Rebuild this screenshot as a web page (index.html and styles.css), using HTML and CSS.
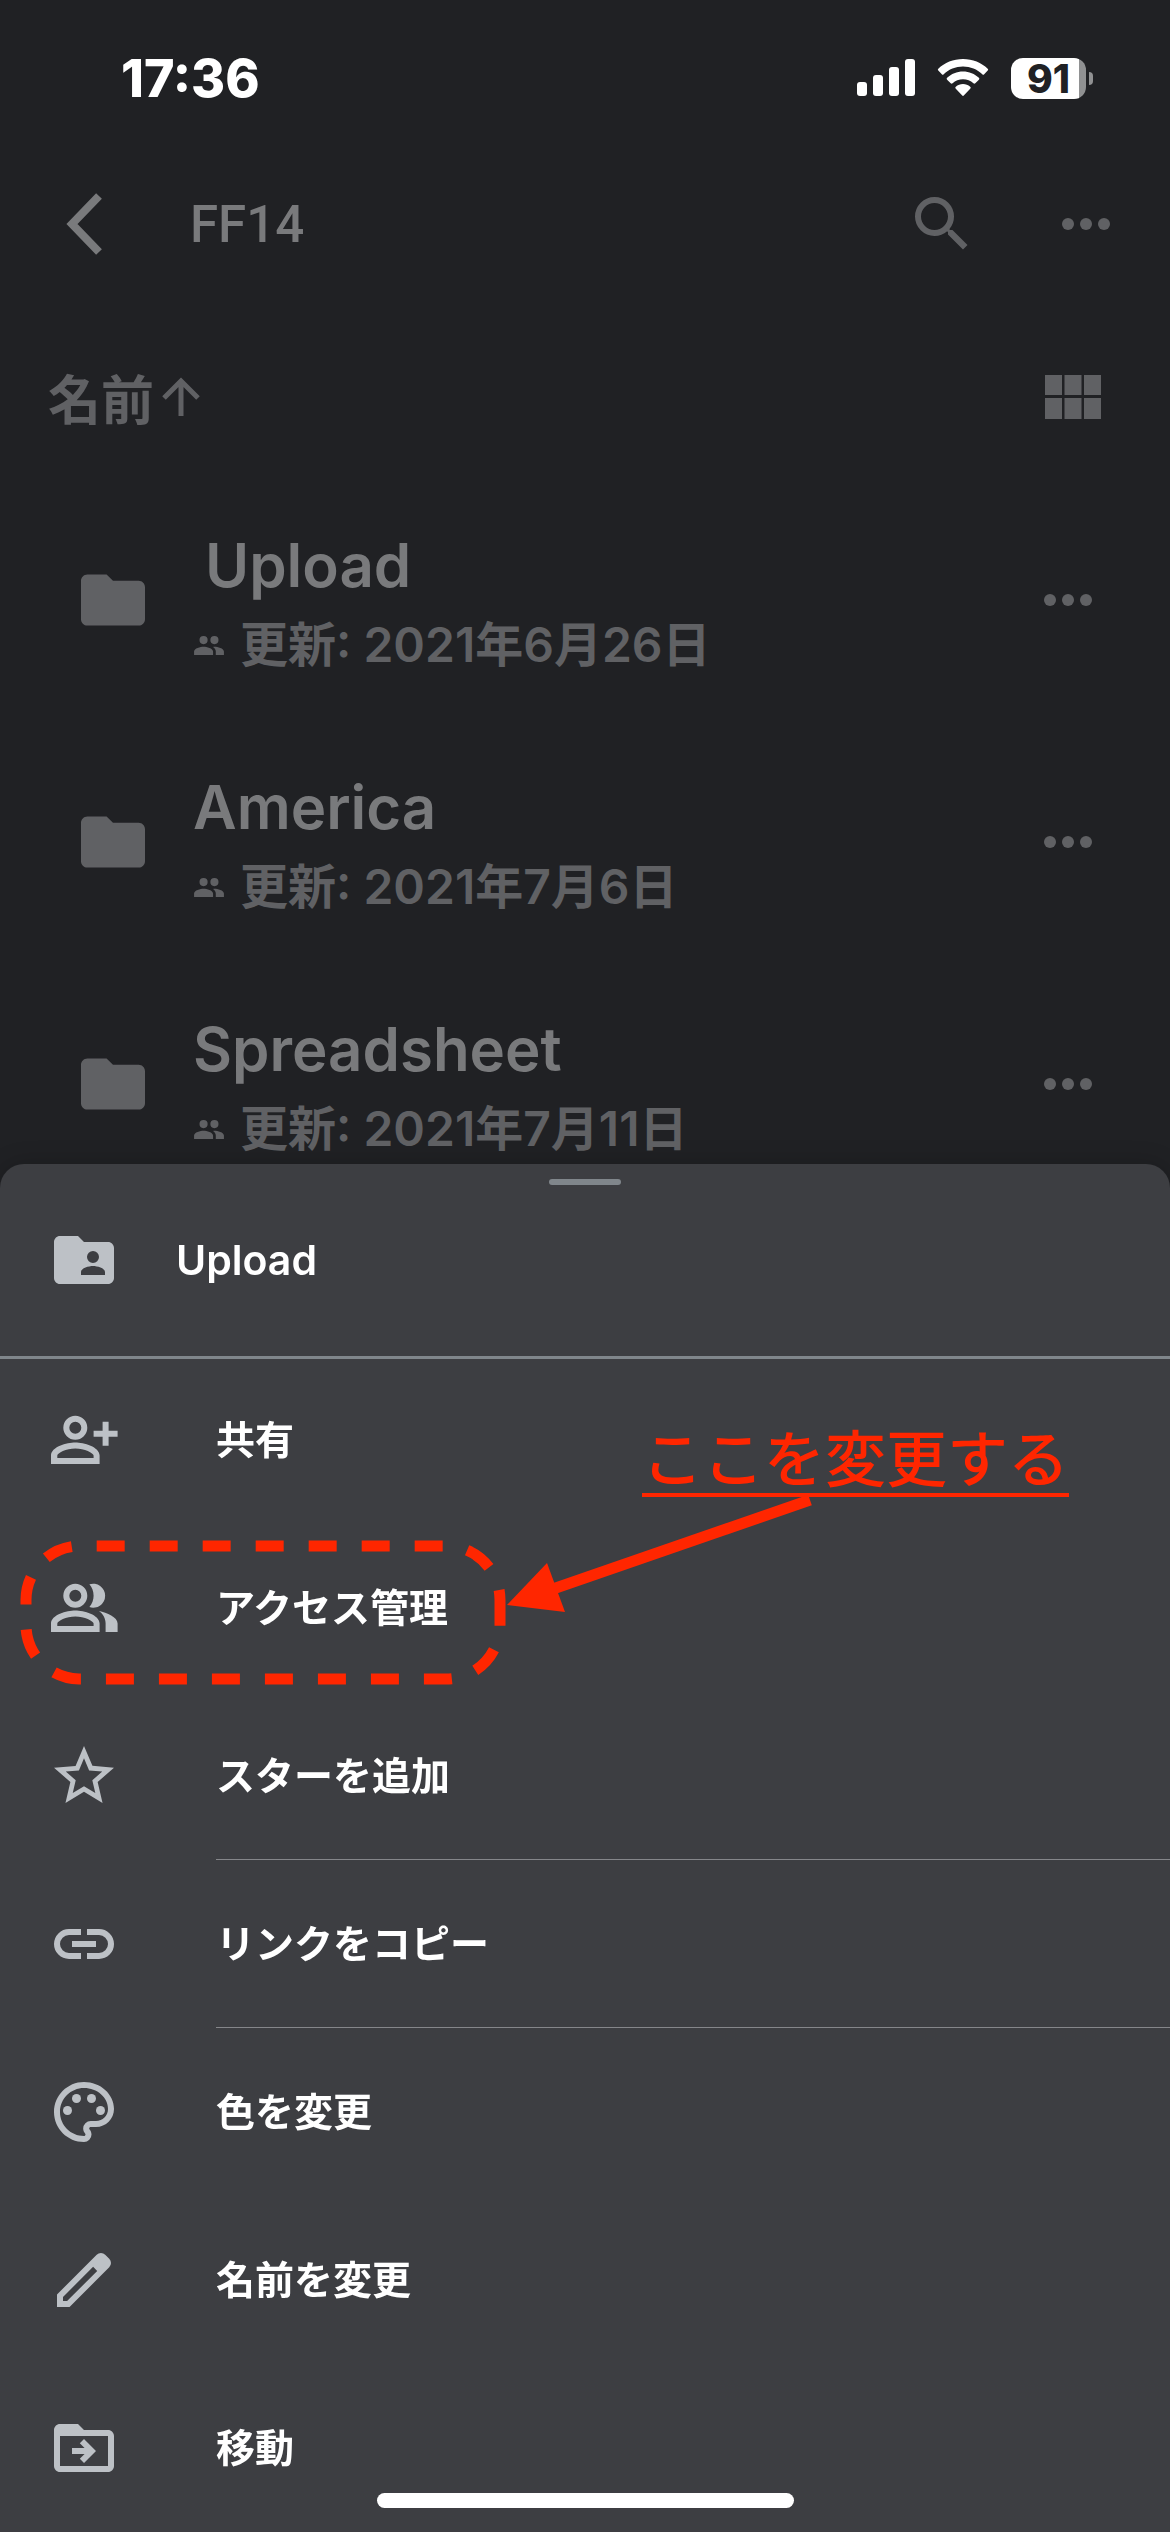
FILE: index.html
```html
<!DOCTYPE html>
<html lang="ja">
<head>
    <meta charset="UTF-8">
    <meta name="viewport" content="width=device-width, initial-scale=1.0">
    <title>FF14</title>
    <link rel="stylesheet" href="styles.css">
</head>
<body>
    <div class="status-bar">
        <span class="clock">17:36</span>
        <div class="status-icons">
            <svg class="signal" width="58" height="38" viewBox="0 0 58 38" fill="currentColor">
                <rect x="0" y="23" width="10" height="14" rx="3"/>
                <rect x="16" y="16" width="10" height="21" rx="3"/>
                <rect x="32" y="8" width="10" height="29" rx="3"/>
                <rect x="48" y="0" width="10" height="37" rx="3"/>
            </svg>
            <svg class="wifi" width="52" height="38" viewBox="0 0 52 38" fill="currentColor">
                <path d="M26 0C35.600 0 44.500 3.700 50.700 9.700a1.300 1.300 0 0 1 0 1.900l-3.500 3.600a1.300 1.300 0 0 1-1.900 0C40.200 10.300 33.400 7.500 26 7.500S11.800 10.300 6.700 15.200a1.300 1.300 0 0 1-1.900 0l-3.500-3.600a1.300 1.300 0 0 1 0-1.900C7.500 3.700 16.400 0 26 0z"/>
                <path d="M26 12.500c6.100 0 11.700 2.400 15.900 6.300a1.300 1.300 0 0 1 0 1.900l-3.600 3.600a1.400 1.400 0 0 1-1.900 0C33.700 21.700 30 20.200 26 20.200s-7.700 1.500-10.400 4.100a1.400 1.400 0 0 1-1.900 0l-3.600-3.600a1.300 1.300 0 0 1 0-1.900c4.200-3.900 9.800-6.300 15.900-6.300z"/>
                <path d="M26 25c2.700 0 5.200 1 7.200 2.700a1.300 1.300 0 0 1 0 2l-6.200 6.600a1.300 1.300 0 0 1-2 0l-6.200-6.600a1.300 1.300 0 0 1 0-2C20.800 26 23.300 25 26 25z"/>
            </svg>
            <div class="battery"><span class="battery-level">91</span></div>
        </div>
    </div>

    <header class="toolbar">
        <button class="icon-button" type="button" aria-label="戻る">
            <svg width="72" height="72" viewBox="0 0 72 72" fill="none" stroke="currentColor" stroke-width="8">
                <path d="M51 8L24 36l27 28"/>
            </svg>
        </button>
        <h1 class="folder-title">FF14</h1>
        <button class="icon-button" type="button" aria-label="検索">
            <svg width="72" height="72" viewBox="0 0 24 24" fill="currentColor">
                <path d="M15.500 14h-.79l-.28-.27A6.471 6.471 0 0 0 16 9.500 6.500 6.500 0 1 0 9.500 16c1.610 0 3.090-.59 4.230-1.570l.27.28v.79l5 4.990L20.490 19l-4.990-5zm-6 0C7.010 14 5 11.990 5 9.500S7.010 5 9.500 5 14 7.010 14 9.500 11.990 14 9.500 14z"/>
            </svg>
        </button>
        <button class="icon-button" type="button" aria-label="その他">
            <svg width="72" height="72" viewBox="0 0 24 24" fill="currentColor">
                <circle cx="6" cy="12" r="2"/><circle cx="12" cy="12" r="2"/><circle cx="18" cy="12" r="2"/>
            </svg>
        </button>
    </header>

    <div class="sort-row">
        <button class="sort-button" type="button">名前
            <svg width="38" height="40" viewBox="0 0 38 40" fill="none" stroke="currentColor" stroke-width="5">
                <path d="M19 39V4M2 21L19 4l17 17"/>
            </svg>
        </button>
        <button class="icon-button" type="button" aria-label="グリッド表示">
            <svg width="56" height="44" viewBox="0 0 56 44" fill="currentColor">
                <path d="M0 0h17v20H0zM19.500 0h17v20h-17zM39 0h17v20H39zM0 23h17v21H0zM19.500 23h17v21h-17zM39 23h17v21H39z"/>
            </svg>
        </button>
    </div>

    <ul class="file-list">
        <li class="file">
            <svg class="file-icon" viewBox="2 4 20 16"><path d="M10 4H4c-1.100 0-2 .9-2 2v12c0 1.100.9 2 2 2h16c1.100 0 2-.9 2-2V8c0-1.100-.9-2-2-2h-8z"/></svg>
            <div class="file-info">
                <h2 class="file-name indented">Upload</h2>
                <p class="file-date">
                    <svg class="shared-icon" viewBox="1 5 22 14"><path d="M16 11a3 3 0 1 0 0-6 3 3 0 0 0 0 6zM8 11a3 3 0 1 0 0-6 3 3 0 0 0 0 6zM8 13c-2.330 0-7 1.170-7 3.500V19h14v-2.500C15 14.170 10.330 13 8 13zM16 13c-.29 0-.62.020-.97.050C16.190 13.890 17 15.020 17 16.500V19h6v-2.500c0-2.330-4.670-3.500-7-3.500z"/></svg>
                    更新: 2021年6月26日
                </p>
            </div>
            <button class="icon-button" type="button" aria-label="Upload のメニュー">
                <svg width="72" height="72" viewBox="0 0 24 24" fill="currentColor">
                    <circle cx="6" cy="12" r="2"/><circle cx="12" cy="12" r="2"/><circle cx="18" cy="12" r="2"/>
                </svg>
            </button>
        </li>
        <li class="file">
            <svg class="file-icon" viewBox="2 4 20 16"><path d="M10 4H4c-1.100 0-2 .9-2 2v12c0 1.100.9 2 2 2h16c1.100 0 2-.9 2-2V8c0-1.100-.9-2-2-2h-8z"/></svg>
            <div class="file-info">
                <h2 class="file-name">America</h2>
                <p class="file-date">
                    <svg class="shared-icon" viewBox="1 5 22 14"><path d="M16 11a3 3 0 1 0 0-6 3 3 0 0 0 0 6zM8 11a3 3 0 1 0 0-6 3 3 0 0 0 0 6zM8 13c-2.330 0-7 1.170-7 3.500V19h14v-2.500C15 14.170 10.330 13 8 13zM16 13c-.29 0-.62.020-.97.050C16.190 13.890 17 15.020 17 16.500V19h6v-2.500c0-2.330-4.670-3.500-7-3.500z"/></svg>
                    更新: 2021年7月6日
                </p>
            </div>
            <button class="icon-button" type="button" aria-label="America のメニュー">
                <svg width="72" height="72" viewBox="0 0 24 24" fill="currentColor">
                    <circle cx="6" cy="12" r="2"/><circle cx="12" cy="12" r="2"/><circle cx="18" cy="12" r="2"/>
                </svg>
            </button>
        </li>
        <li class="file">
            <svg class="file-icon" viewBox="2 4 20 16"><path d="M10 4H4c-1.100 0-2 .9-2 2v12c0 1.100.9 2 2 2h16c1.100 0 2-.9 2-2V8c0-1.100-.9-2-2-2h-8z"/></svg>
            <div class="file-info">
                <h2 class="file-name">Spreadsheet</h2>
                <p class="file-date">
                    <svg class="shared-icon" viewBox="1 5 22 14"><path d="M16 11a3 3 0 1 0 0-6 3 3 0 0 0 0 6zM8 11a3 3 0 1 0 0-6 3 3 0 0 0 0 6zM8 13c-2.330 0-7 1.170-7 3.500V19h14v-2.500C15 14.170 10.330 13 8 13zM16 13c-.29 0-.62.020-.97.050C16.190 13.890 17 15.020 17 16.500V19h6v-2.500c0-2.330-4.670-3.500-7-3.500z"/></svg>
                    更新: 2021年7月11日
                </p>
            </div>
            <button class="icon-button" type="button" aria-label="Spreadsheet のメニュー">
                <svg width="72" height="72" viewBox="0 0 24 24" fill="currentColor">
                    <circle cx="6" cy="12" r="2"/><circle cx="12" cy="12" r="2"/><circle cx="18" cy="12" r="2"/>
                </svg>
            </button>
        </li>
    </ul>

    <!-- メニューシート -->
    <section class="sheet">
        <div class="handle"></div>
        <div class="sheet-header">
            <svg class="menu-icon" viewBox="0 0 24 24"><path fill-rule="evenodd" d="M10 4H4c-1.100 0-2 .9-2 2v12c0 1.100.9 2 2 2h16c1.100 0 2-.9 2-2V8c0-1.100-.9-2-2-2h-8zM15 9a2 2 0 1 1 0 4 2 2 0 0 1 0-4zM11 17v-1c0-1.330 2.670-2 4-2s4 .67 4 2v1z"/></svg>
            <h2 class="sheet-title">Upload</h2>
        </div>
        <nav class="menu">
            <button class="menu-item" type="button">
                <svg class="menu-icon" viewBox="0 0 24 24"><path fill-rule="evenodd" d="M9.100 3.900a4 4 0 1 1 0 8 4 4 0 0 1 0-8zm0 2a2 2 0 1 0 0 4 2 2 0 0 0 0-4zM1 20v-2.800c0-3 5.300-4.400 8.100-4.400s8.100 1.400 8.100 4.400V20zM3.100 18h12.100v-.8c0-.9-3.100-2.400-6.100-2.400s-6 1.500-6 2.400zM18.200 5.900h2v3h3v2h-3v3h-2v-3h-3v-2h3z"/></svg>
                <span class="menu-label">共有</span>
            </button>
            <button class="menu-item" type="button">
                <svg class="menu-icon" viewBox="0 0 24 24"><path fill-rule="evenodd" d="M9.100 3.900a4 4 0 1 1 0 8 4 4 0 0 1 0-8zm0 2a2 2 0 1 0 0 4 2 2 0 0 0 0-4zM1 20v-2.800c0-3 5.300-4.400 8.100-4.400s8.100 1.400 8.100 4.400V20zM3.100 18h12.100v-.8c0-.9-3.100-2.400-6.100-2.400s-6 1.500-6 2.400zM13.800 4.100a4 4 0 1 1 0 7.600c.9-1.100 1.400-2.400 1.400-3.800s-.5-2.700-1.400-3.800zM17 13c2.600.6 6.200 2 6.200 4.200V20h-4v-2.800c0-1.700-.8-3.200-2.200-4.200z"/></svg>
                <span class="menu-label">アクセス管理</span>
            </button>
            <button class="menu-item" type="button">
                <svg class="menu-icon" viewBox="0 0 24 24"><path d="M22 9.240l-7.190-.62L12 2 9.190 8.630 2 9.240l5.460 4.730L5.820 21 12 17.270 18.180 21l-1.630-7.030L22 9.240zM12 15.400l-3.760 2.270 1-4.280-3.320-2.880 4.380-.38L12 6.100l1.710 4.040 4.380.38-3.320 2.880 1 4.280L12 15.400z"/></svg>
                <span class="menu-label divided">スターを追加</span>
            </button>
            <button class="menu-item" type="button">
                <svg class="menu-icon" viewBox="0 0 24 24"><path d="M11 9V7H7a5 5 0 0 0 0 10h4v-2H7a3 3 0 0 1 0-6zM13 9V7h4a5 5 0 0 1 0 10h-4v-2h4a3 3 0 0 0 0-6zM8 11h8v2H8z"/></svg>
                <span class="menu-label divided">リンクをコピー</span>
            </button>
            <button class="menu-item" type="button">
                <svg class="menu-icon" viewBox="0 0 24 24">
                    <path d="M12 22C6.490 22 2 17.510 2 12S6.490 2 12 2s10 4.040 10 9c0 3.310-2.690 6-6 6h-1.770c-.28 0-.5.22-.5.5 0 .12.050.23.130.33.410.47.640 1.060.640 1.670A2.500 2.500 0 0 1 12 22zm0-18c-4.410 0-8 3.590-8 8s3.590 8 8 8c.28 0 .5-.22.5-.5a.54.54 0 0 0-.14-.35c-.41-.46-.63-1.050-.63-1.650a2.500 2.500 0 0 1 2.500-2.500H16c2.210 0 4-1.790 4-4 0-3.860-3.590-7-8-7z"/>
                    <circle cx="6.500" cy="11.500" r="1.500"/><circle cx="9.500" cy="7.500" r="1.500"/><circle cx="14.500" cy="7.500" r="1.500"/><circle cx="17.500" cy="11.500" r="1.500"/>
                </svg>
                <span class="menu-label">色を変更</span>
            </button>
            <button class="menu-item" type="button">
                <svg class="menu-icon" viewBox="0 0 24 24"><path fill-rule="evenodd" d="M20.410 4.940l-1.350-1.350a2 2 0 0 0-2.830 0L3 16.820V21h4.180L20.410 7.770a2 2 0 0 0 0-2.830zM5 19v-1.360L15.040 7.600l1.360 1.360L6.360 19z"/></svg>
                <span class="menu-label">名前を変更</span>
            </button>
            <button class="menu-item" type="button">
                <svg class="menu-icon" viewBox="0 0 24 24"><path fill-rule="evenodd" d="M20 6h-8l-2-2H4c-1.100 0-2 .9-2 2v12c0 1.100.9 2 2 2h16c1.100 0 2-.9 2-2V8c0-1.100-.9-2-2-2zm0 12H4V8h16zM12 9l4 4-4 4-1.400-1.400 1.600-1.600H8v-2h4.200l-1.600-1.600z"/></svg>
                <span class="menu-label">移動</span>
            </button>
        </nav>

        <!-- 注釈 -->
        <svg class="marks" width="840" height="200" viewBox="0 1490 840 200">
            <path d="M500 1618V1600A54 54 0 0 0 446 1546H79A54 54 0 0 0 26 1600V1625A54 54 0 0 0 79 1679H446A54 54 0 0 0 500 1625Z" fill="none" stroke="#ff2600" stroke-width="11" stroke-dasharray="28 25"/>
            <path d="M810 1500L550 1590" stroke="#ff2600" stroke-width="11"/>
            <path d="M507 1605L547 1563L565 1612Z" fill="#ff2600"/>
        </svg>
        <p class="note">ここを変更する</p>
        <div class="home-indicator"></div>
    </section>
</body>
</html>
```

FILE: styles.css
```css
* {
    box-sizing: border-box;
}
body {
    margin: 0;
    min-height: 100vh;
    background: #202124;
    color: #606164;
    font-family: Inter, "Noto Sans CJK JP", sans-serif;
    overflow: hidden;
}
h1, h2, p, ul {
    margin: 0;
    padding: 0;
}
svg {
    display: block;
    flex-shrink: 0;
}
button {
    margin: 0;
    padding: 0;
    border: 0;
    background: none;
    color: inherit;
    font: inherit;
    text-align: left;
}

/* ステータスバー */
.status-bar {
    display: flex;
    align-items: center;
    justify-content: space-between;
    height: 156px;
    padding: 0 84px 0 121px;
    color: #fff;
}
.clock {
    font-size: 52px;
    font-weight: 800;
}
.status-icons {
    display: flex;
    align-items: center;
    gap: 22px;
}
.battery {
    position: relative;
    width: 75px;
    height: 41px;
    border-radius: 12px;
    background: linear-gradient(to right, #fff 68px, #909192 68px);
    color: #202124;
    text-align: center;
}
.battery::after {
    content: "";
    position: absolute;
    left: 78px;
    top: 14px;
    width: 4px;
    height: 13px;
    border-radius: 0 4px 4px 0;
    background: #909192;
}
.battery-level {
    font-size: 39px;
    font-weight: 800;
    line-height: 41px;
}

/* ヘッダー */
.toolbar {
    display: flex;
    align-items: center;
    height: 136px;
    padding: 0 48px;
}
.toolbar .icon-button:first-child {
    color: #797a7c;
}
.folder-title {
    flex: 1;
    margin-left: 70px;
    color: #797a7c;
    font-family: Roboto, sans-serif;
    font-size: 51px;
    font-weight: 500;
}
.toolbar .icon-button + .icon-button {
    margin-left: 72px;
}
.sort-row {
    display: flex;
    align-items: center;
    justify-content: space-between;
    height: 150px;
    margin-top: 30px;
    padding: 0 69px 0 48px;
}
.sort-button {
    display: flex;
    align-items: center;
    gap: 8px;
    font-size: 53px;
    font-weight: 600;
}

/* フォルダ一覧 */
.file-list {
    margin-top: 7px;
    list-style: none;
}
.file {
    display: flex;
    align-items: center;
    height: 242px;
    padding: 0 66px 0 81px;
}
.file-icon {
    width: 64px;
    height: 52px;
    fill: #606164;
}
.file-info {
    flex: 1;
    margin-left: 48px;
    padding-top: 10px;
}
.file-name {
    color: #797a7c;
    font-size: 60px;
    font-weight: 600;
    line-height: 80px;
}
.indented {
    padding-left: 12px;
}
.file-date {
    display: flex;
    align-items: center;
    gap: 15px;
    font-size: 48px;
    font-weight: 600;
    line-height: 80px;
}
.shared-icon {
    width: 32px;
    height: 19px;
    fill: #606164;
}

/* メニューシート */
.sheet {
    position: fixed;
    left: 0;
    right: 0;
    bottom: 0;
    border-radius: 24px 24px 0 0;
    background: #3d3e42;
    color: #fff;
    box-shadow: 0 0 24px rgba(0, 0, 0, 0.2);
}
.handle {
    position: absolute;
    top: 15px;
    left: calc(50% - 36px);
    width: 72px;
    height: 6px;
    border-radius: 3px;
    background: #80868b;
}
.sheet-header {
    display: flex;
    align-items: center;
    height: 192px;
    padding: 0 48px;
}
.sheet-title {
    margin-left: 56px;
    font-size: 41px;
    font-weight: 600;
}
.menu {
    box-shadow: inset 0 3px 0 #80868b;
}
.menu-item {
    display: flex;
    align-items: center;
    width: 100%;
    height: 168px;
    padding-left: 48px;
}
.menu-icon {
    width: 72px;
    height: 72px;
    fill: #bdc1c6;
}
.menu-label {
    flex: 1;
    margin-left: 96px;
    font-size: 39px;
    font-weight: 600;
    line-height: 168px;
}
.divided {
    height: 168px;
    border-bottom: 1px solid #85868a;
}

/* 注釈 */
.marks {
    position: absolute;
    left: 0;
    top: 326px;
}
.note {
    position: absolute;
    left: 642px;
    top: 263px;
    border-bottom: 4px solid #ff2600;
    color: #ff2600;
    font-size: 61px;
    font-weight: 500;
    line-height: 66px;
}
.home-indicator {
    position: absolute;
    left: calc(50% - 208px);
    bottom: 24px;
    width: 417px;
    height: 15px;
    border-radius: 8px;
    background: #fff;
}
```
